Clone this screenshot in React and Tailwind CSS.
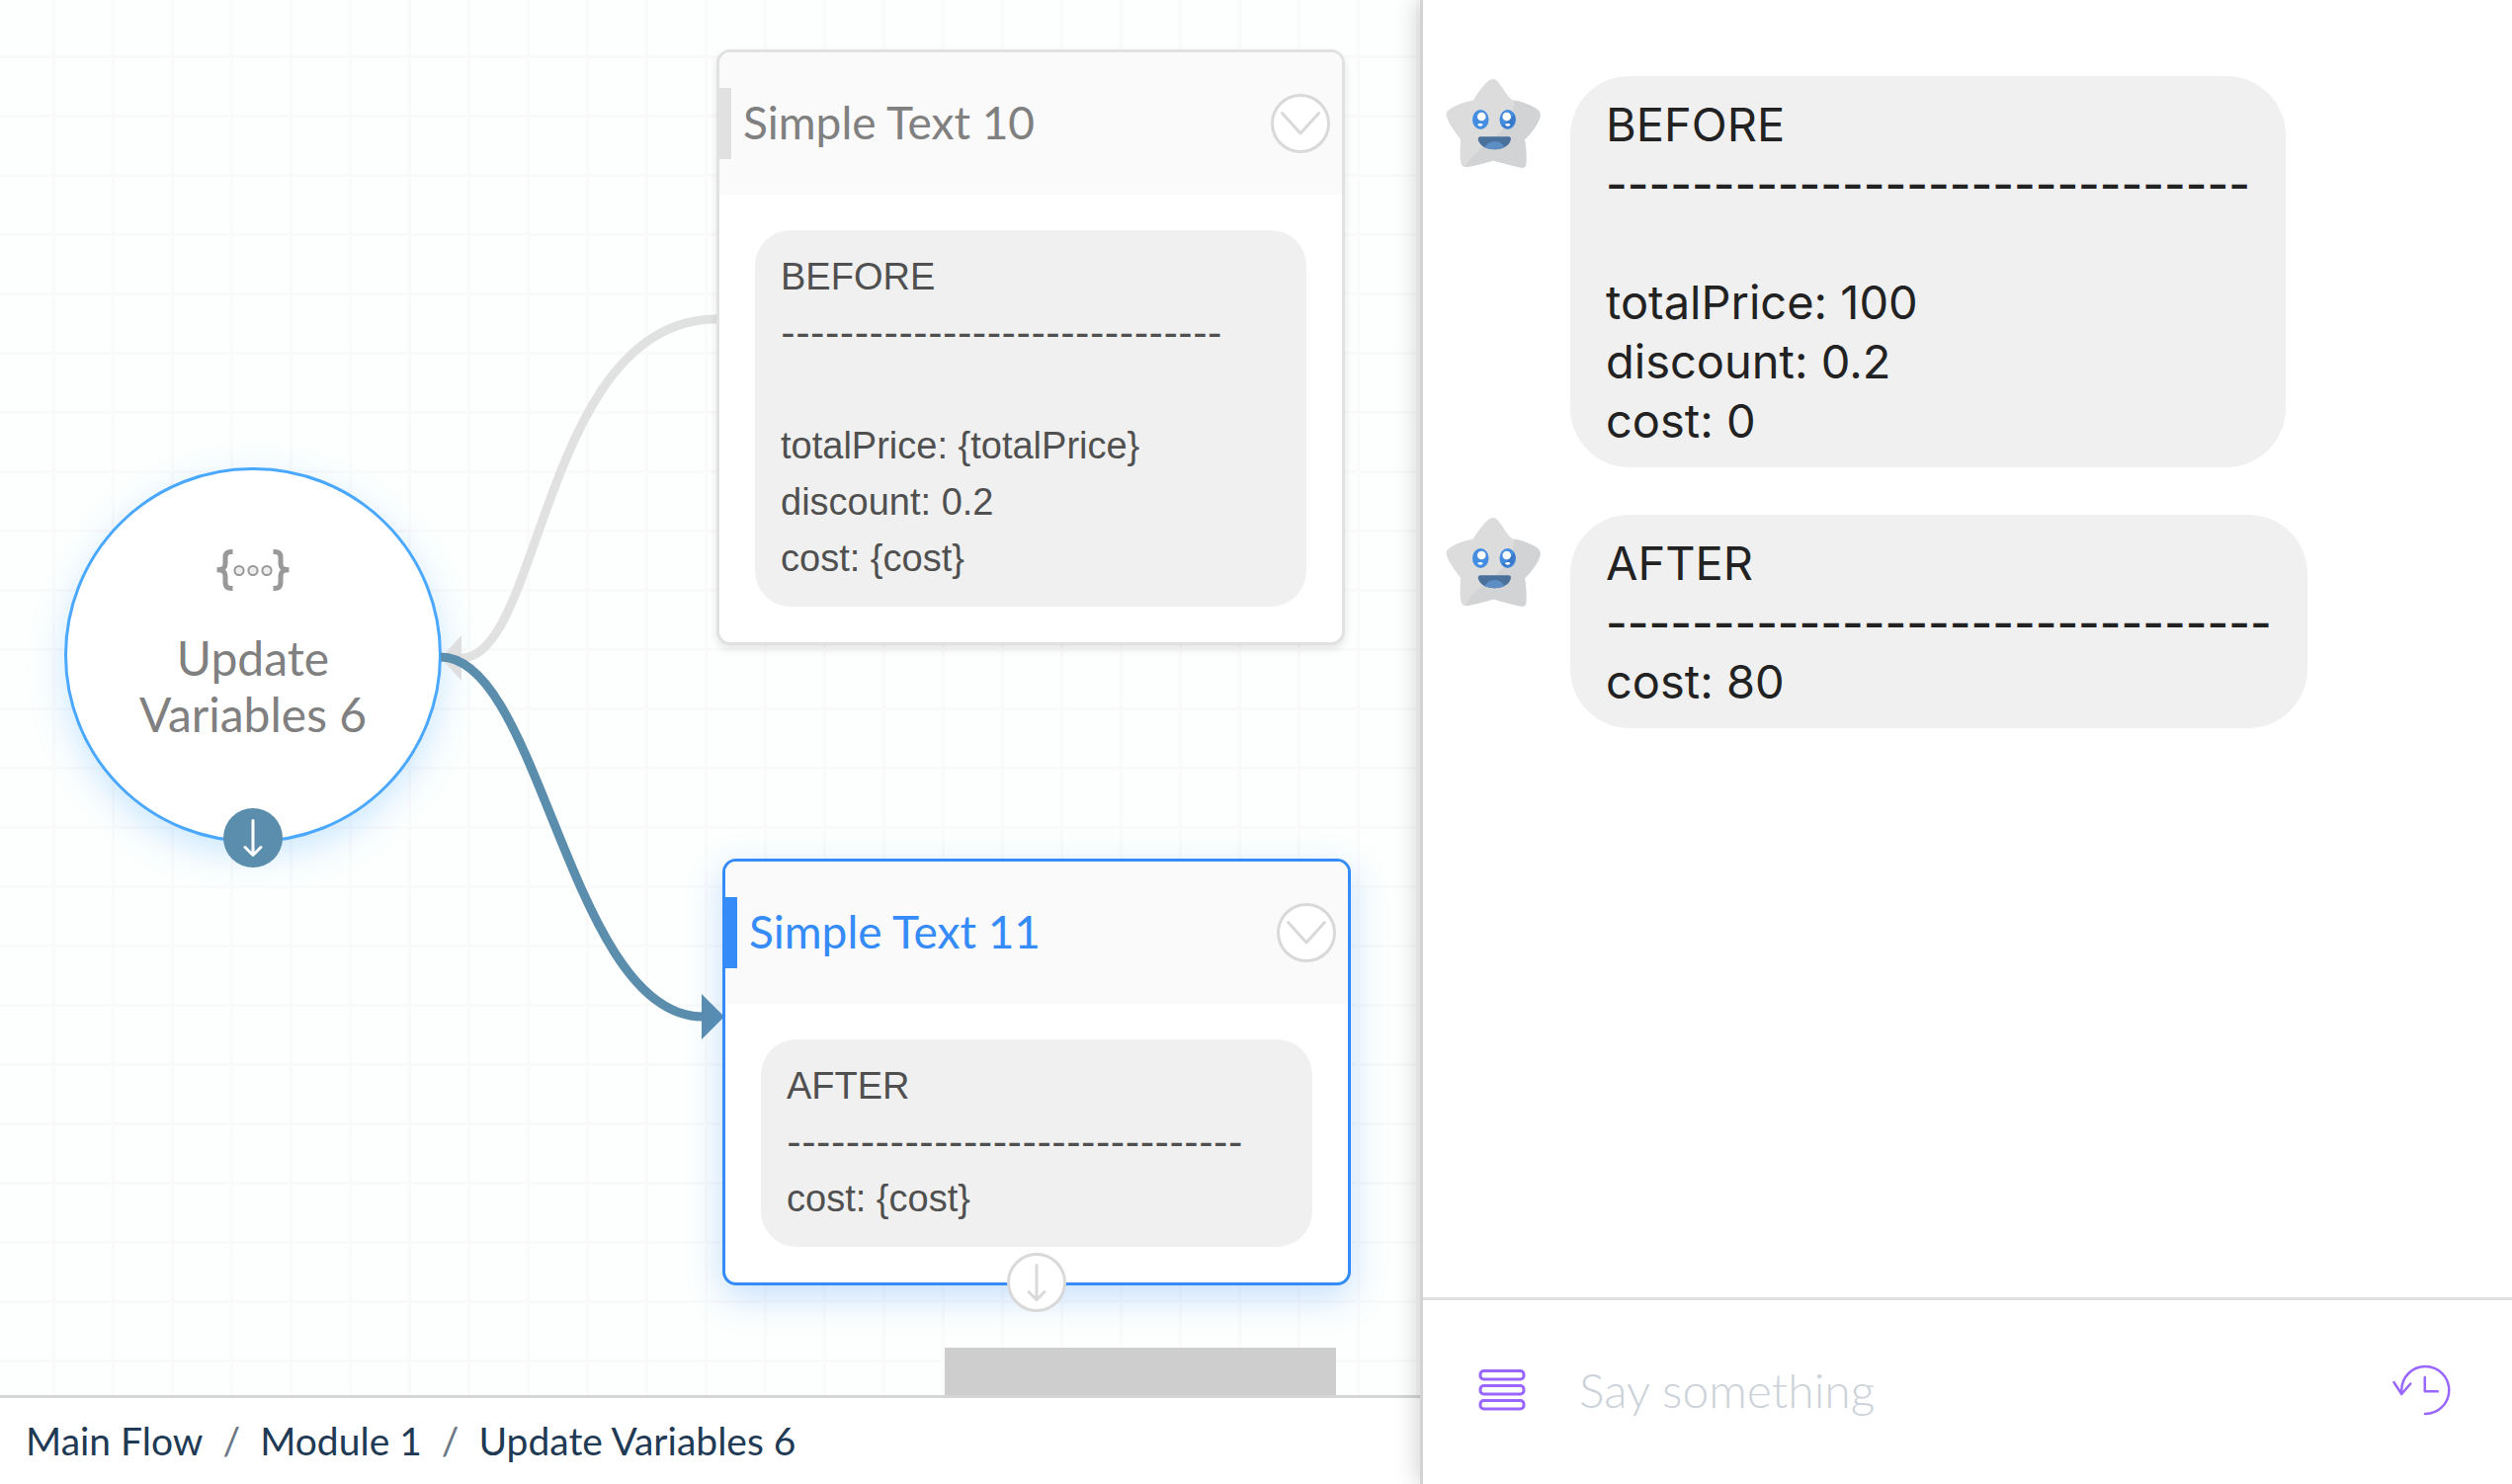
const flowNodes = [
  {
    id: 'simple-text-10',
    title: 'Simple Text 10',
    lines: ['BEFORE', '-'.repeat(30), '', 'totalPrice: {totalPrice}', 'discount: 0.2', 'cost: {cost}'],
    position: 'left-[725px] top-[50px]',
    selected: false,
  },
  {
    id: 'simple-text-11',
    title: 'Simple Text 11',
    lines: ['AFTER', '-'.repeat(31), 'cost: {cost}'],
    position: 'left-[731px] top-[869px]',
    selected: true,
  },
];

const chatMessages = [
  { id: 1, lines: ['BEFORE', '-'.repeat(30), '', 'totalPrice: 100', 'discount: 0.2', 'cost: 0'] },
  { id: 2, lines: ['AFTER', '-'.repeat(31), 'cost: 80'] },
];

const breadcrumbs = ['Main Flow', 'Module 1', 'Update Variables 6'];

function ArrowDownIcon() {
  return (
    <svg className="w-[60px] h-[60px]" viewBox="0 0 60 60" fill="none" stroke="currentColor" strokeWidth="3" strokeLinecap="round" strokeLinejoin="round">
      <path d="M30 12.5V47M22 39.5L30 47.5L38 39.5" />
    </svg>
  );
}

function VariablesIcon() {
  return (
    <svg className="w-[76px] h-[44px]" viewBox="0 0 76 44" fill="none" stroke="#999999">
      <path strokeWidth="5" d="M17.500 3.400H16C11.500 3.400 10 5.500 10 9V15.500C10 19.500 8 21.800 1.500 21.800C8 21.800 10 24 10 28V34.500C10 38.500 12 40.600 16 40.600H17.500" />
      <path strokeWidth="5" d="M58.500 3.400H60C64.500 3.400 66 5.500 66 9V15.500C66 19.500 68 21.800 74.500 21.800C68 21.800 66 24 66 28V34.500C66 38.500 64 40.600 60 40.600H58.500" />
      <g strokeWidth="2" fill="#eeeeee">
        <circle cx="24" cy="22.500" r="4.600" />
        <circle cx="38" cy="22.500" r="4.600" />
        <circle cx="52" cy="22.500" r="4.600" />
      </g>
    </svg>
  );
}

function StarAvatar() {
  return (
    <svg className="w-24 h-[90px] mt-[3px] shrink-0" viewBox="38 28 289 272">
      <defs>
        <clipPath id="star-shape">
          <path d="M184 28C191 28 197 36 204 45C217 62 233 93 246 93C265 96 290 104 310 116C325 125 329 134 326 145C320 165 299 195 279 213C283 235 285 262 283 288C282 299 276 301 262 298C236 293 206 283 184 277C162 283 139 290 116 295C100 298 90 299 86 290C80 275 81 245 83 212C68 192 50 170 42 148C36 133 38 129 50 120C68 107 95 98 122 93C131 76 147 54 161 40C170 31 177 28 184 28Z" />
        </clipPath>
      </defs>
      <g clipPath="url(#star-shape)">
        <rect x="30" y="20" width="310" height="290" fill="#dcdcdc" />
        <path d="M247 92C245 150 215 185 170 220C135 248 110 270 96 298L100 310H340V92Z" fill="#d2d3d4" />
      </g>
      <g fill="#458de0">
        <ellipse cx="144" cy="152" rx="25" ry="30" />
        <ellipse cx="227" cy="152" rx="25" ry="30" />
      </g>
      <path d="M247 135A25 30 0 0 1 208 171Q232 160 247 135Z" fill="#3978c8" />
      <g fill="#ffffff">
        <ellipse cx="147" cy="143" rx="13" ry="13" />
        <ellipse cx="224" cy="143" rx="13" ry="13" />
        <ellipse cx="143" cy="168" rx="8" ry="4" />
        <ellipse cx="227" cy="168" rx="8" ry="4" />
      </g>
      <path d="M143 204H230C236 204 238 209 236 215C231 233 210 243 187 243C162 243 142 232 137 215C135 209 138 204 143 204Z" fill="#49719c" />
      <path d="M156 237C164 224 174 219 188 219C201 219 210 224 217 237C199 245 173 245 156 237Z" fill="#5c8dc3" />
    </svg>
  );
}

function MenuIcon() {
  return (
    <svg className="w-12 h-[42px]" viewBox="0 0 48 42" fill="none" stroke="#9966ff" strokeWidth="3">
      <rect x="2" y="1.500" width="44" height="8.500" rx="3.500" />
      <rect x="2" y="16.500" width="44" height="8.500" rx="3.500" />
      <rect x="2" y="31.500" width="44" height="8.500" rx="3.500" />
    </svg>
  );
}

function HistoryIcon() {
  return (
    <svg className="w-[60px] h-[54px]" viewBox="0 0 60 54" fill="none" stroke="#9966ff" strokeWidth="2.500" strokeLinecap="round" strokeLinejoin="round">
      <path d="M10.300 30V27A24 24 0 1 1 34 51" />
      <path d="M2.500 19L10.300 31L19.300 20.500" />
      <path d="M33.800 14V28.200H46.800" />
    </svg>
  );
}

function FlowNode({ node }) {
  return (
    <article
      className={`absolute w-[636px] rounded-[14px] border-[3px] bg-white ${node.position} ${
        node.selected
          ? 'border-[#358bf8] shadow-[0_12px_36px_rgba(53,139,248,0.28)]'
          : 'border-[#e1e1e1] shadow-[0_4px_8px_rgba(0,0,0,0.1)]'
      }`}
    >
      <header className="flex h-36 items-center rounded-t-[11px] bg-[#fafafa] pr-3">
        <span className={`h-[72px] w-3 ${node.selected ? 'bg-[#358bf8]' : 'bg-[#e1e1e1]'}`} />
        <h2 className={`flex-1 pb-1 pl-3 font-['Lato'] text-[46px] leading-[57px] ${node.selected ? 'text-[#358bf8]' : 'text-[#808080]'}`}>
          {node.title}
        </h2>
        <button type="button" aria-label="Collapse" className="h-[60px] w-[60px] rounded-full border-[3px] border-[#d9d9d9] bg-white">
          <svg className="h-full w-full" viewBox="3 3 54 54" fill="none" stroke="#d9d9d9" strokeWidth="3" strokeLinecap="round" strokeLinejoin="round">
            <path d="M11.500 19.500L30 40L48.500 19.500" />
          </svg>
        </button>
      </header>
      <div className="p-9">
        <div className="rounded-[36px] bg-[#f0f0f0] px-[26px] pt-[19px] pb-5 font-['Liberation_Sans'] text-[38px] leading-[57px] text-[#505050]">
          {node.lines.map((line, i) => (
            <p key={i} className={`h-[57px] whitespace-pre ${line.startsWith('--') ? "font-['Inter'] text-[32px] font-semibold" : ''}`}>
              {line}
            </p>
          ))}
        </div>
      </div>
      {node.selected && (
        <button type="button" aria-label="Next step" className="absolute -bottom-[30px] left-1/2 flex h-[60px] w-[60px] -translate-x-1/2 items-center justify-center rounded-full border-[3px] border-[#d9d9d9] bg-white text-[#d9d9d9]">
          <span className="shrink-0">
            <ArrowDownIcon />
          </span>
        </button>
      )}
    </article>
  );
}

function FlowCanvas() {
  return (
    <div className="relative flex-1 overflow-hidden bg-[#fdfffe] bg-[linear-gradient(to_right,#fafafa_3px,transparent_3px),linear-gradient(to_bottom,#fafafa_3px,transparent_3px)] bg-[size:60px_60px] bg-[position:53px_56px]">
      <div className="absolute left-[65px] top-[473px] flex h-[380px] w-[382px] flex-col items-center rounded-full border-[3px] border-[#4aa8ff] bg-white pt-[79px] shadow-[0_12px_36px_rgba(74,168,255,0.28)]">
        <VariablesIcon />
        <h2 className="mt-[38px] text-center font-['Lato'] text-[48px] leading-[57px] text-[#808080]">
          Update
          <br />
          Variables 6
        </h2>
        <button type="button" aria-label="Next step" className="absolute -bottom-7 left-1/2 h-[60px] w-[60px] -translate-x-1/2 rounded-full bg-[#5b8dad] text-white">
          <ArrowDownIcon />
        </button>
      </div>

      {/* Connections between nodes */}
      <svg className="absolute left-0 top-0 h-[1412px] w-[1439px]" viewBox="0 0 1439 1412" fill="none">
        <path d="M725 323C550 323 548 666 467 666" stroke="#e1e1e1" strokeWidth="9" />
        <path d="M446 666L467 643V689Z" fill="#dfdfe2" />
        <path d="M446 665C547 665 577 1029 711 1029" stroke="#5b8dad" strokeWidth="9" />
        <path d="M733 1029L710 1006V1052Z" fill="#5b8dad" />
      </svg>

      {flowNodes.map((node) => (
        <FlowNode key={node.id} node={node} />
      ))}

      {/* Minimap edge */}
      <div className="absolute bottom-0 left-[956px] h-12 w-[396px] bg-[#c6c6c6]/85" />
    </div>
  );
}

function Breadcrumbs() {
  return (
    <nav aria-label="Breadcrumb" className="h-[90px] border-t-[3px] border-[#d5d5d5] bg-white px-[26px]">
      <ol className="flex h-full items-center gap-5 font-['Lato'] text-[39px] text-[#1f3a54]">
        {breadcrumbs.map((crumb, i) => (
          <li key={crumb} className="flex gap-5">
            {i > 0 && <span className="text-[#6b7785]">/</span>}
            <a href="#">{crumb}</a>
          </li>
        ))}
      </ol>
    </nav>
  );
}

function ChatPanel() {
  return (
    <aside className="relative z-10 flex min-w-0 flex-col border-l-[3px] border-[#d3d3d3] bg-white shadow-[0_0_24px_rgba(0,0,0,0.22)]">
      <div className="flex flex-1 flex-col gap-12 overflow-hidden pl-[23px] pt-[77px]">
        {chatMessages.map((message) => (
          <div key={message.id} className="flex items-start gap-[30px]">
            <StarAvatar />
            <div className="rounded-[60px] bg-[#f0f0f0] px-9 pt-[19px] pb-[17px] font-['Inter'] text-[47px] leading-[60px] text-[#222222]">
              {message.lines.map((line, i) => (
                <p key={i} className={`h-[60px] whitespace-pre ${line.startsWith('--') ? 'font-medium' : ''}`}>
                  {line}
                </p>
              ))}
            </div>
          </div>
        ))}
      </div>
      <form className="flex h-[189px] items-center border-t-[3px] border-[#e0e0e0] pb-[5px] pl-14 pr-[62px]" onSubmit={(e) => e.preventDefault()}>
        <button type="button" aria-label="Menu">
          <MenuIcon />
        </button>
        <input
          type="text"
          aria-label="Message"
          placeholder="Say something"
          className="ml-[54px] h-[60px] min-w-0 flex-1 bg-transparent font-['Lato'] text-[48px] font-light placeholder-[#ccd2d9] focus:outline-none"
        />
        <button type="button" aria-label="History">
          <HistoryIcon />
        </button>
      </form>
    </aside>
  );
}

export default function App() {
  return (
    <div className="grid h-screen grid-cols-[1437fr_1105fr] overflow-hidden bg-white">
      <main className="flex min-w-0 flex-col">
        <FlowCanvas />
        <Breadcrumbs />
      </main>
      <ChatPanel />
    </div>
  );
}
